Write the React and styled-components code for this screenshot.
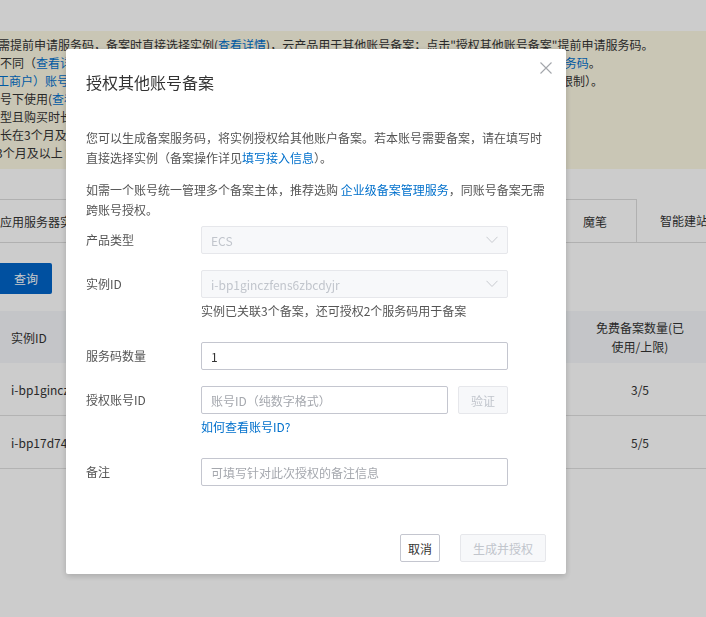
import React from 'react';
import styled, { createGlobalStyle } from 'styled-components';

const GlobalStyle = createGlobalStyle`
  html, body { margin: 0; padding: 0; background: #fff; }
  body {
    font-family: "Noto Sans CJK SC", Roboto, sans-serif;
    font-size: 12px;
    color: #333;
  }
  * { box-sizing: border-box; }
`;

const Page = styled.div`
  width: 706px;
  height: 617px;
  overflow: hidden;
  padding-top: 31px;
`;

const Notice = styled.div`
  background: #fcf8e3;
  padding: 5px 0 7px;
`;

const NoticeLine = styled.div`
  line-height: 18px;
  height: 18px;
  white-space: nowrap;
  color: #333;
  margin-left: ${(p) => p.$shift || 0}px;
`;

const A = styled.span`
  color: #0070cc;
`;

const TabBar = styled.div`
  margin-top: 30px;
  display: flex;
  height: 44px;
  border-bottom: 1px solid #dcdcdc;
`;

const Tab = styled.div`
  display: flex;
  align-items: center;
  justify-content: ${(p) => (p.$center ? 'center' : 'flex-start')};
  flex: ${(p) => (p.$grow ? '1 1 auto' : `0 0 ${p.$w}px`)};
  padding-left: ${(p) => p.$pl || 0}px;
  padding-right: ${(p) => p.$pr || 0}px;
  border-top: ${(p) => (p.$noTop ? 'none' : '1px solid #dcdcdc')};
  border-left: ${(p) => (p.$left ? '1px solid #dcdcdc' : 'none')};
  white-space: nowrap;
  overflow: hidden;
  color: #333;
`;

const Toolbar = styled.div`
  margin-top: 20px;
  display: flex;
`;

const QueryButton = styled.div`
  width: 52px;
  height: 31px;
  background: #0064c8;
  color: #fff;
  border-radius: 0 2px 2px 0;
  display: flex;
  align-items: center;
  justify-content: center;
`;

const Table = styled.div`
  margin-top: 17px;
`;

const Row = styled.div`
  display: grid;
  grid-template-columns: 1fr 120px 6px;
  height: ${(p) => (p.$head ? 52 : 53)}px;
  background: ${(p) => (p.$head ? '#f5f7fa' : '#fff')};
  border-bottom: ${(p) => (p.$head ? 'none' : '1px solid #e0e0e0')};
  align-items: center;
  color: #333;
`;

const Cell = styled.div`
  padding: ${(p) => (p.$center ? '0 12px' : '0 0 0 11px')};
  text-align: ${(p) => (p.$center ? 'center' : 'left')};
  line-height: 19px;
  white-space: ${(p) => (p.$wrap ? 'normal' : 'nowrap')};
  overflow: hidden;
`;

const Overlay = styled.div`
  position: fixed;
  inset: 0;
  background: rgba(0, 0, 0, 0.2);
`;

const Modal = styled.div`
  position: fixed;
  left: 66px;
  top: 49px;
  width: 500px;
  background: #fff;
  border-radius: 2px;
  box-shadow: 0 2px 6px rgba(0, 0, 0, 0.18);
  padding: 21px 20px 12px;
`;

const Title = styled.div`
  font-size: 16px;
  line-height: 24px;
  height: 24px;
  color: #333;
`;

const Close = styled.div`
  position: absolute;
  top: 13px;
  right: 14px;
  width: 12px;
  height: 12px;
  display: flex;
`;

const Para = styled.p`
  margin: ${(p) => p.$mt}px 0 0;
  font-size: 12px;
  line-height: 20px;
  color: #555;
`;

const Form = styled.div`
  margin-top: 6px;
`;

const FormItem = styled.div`
  display: grid;
  grid-template-columns: 115px 307px;
  margin-bottom: 16px;
`;

const Label = styled.div`
  line-height: 28px;
  color: #555;
`;

const Control = styled.div`
  display: flex;
  flex-direction: column;
`;

const SelectBox = styled.div`
  height: 28px;
  border: 1px solid #e6e7eb;
  background: #f7f8fa;
  border-radius: 2px;
  padding: 0 9px;
  display: flex;
  align-items: center;
  justify-content: space-between;
  color: #c1c5cc;
`;

const Input = styled.input`
  height: 28px;
  width: 100%;
  border: 1px solid #c4c6cf;
  border-radius: 2px;
  padding: 0 9px;
  font: inherit;
  color: #333;
  background: #fff;
  outline: none;
  &::placeholder { color: #a5a8ae; }
`;

const InlineRow = styled.div`
  display: flex;
  gap: 10px;
`;

const Help = styled.div`
  margin-top: 4px;
  margin-bottom: 6px;
  line-height: 18px;
  height: 18px;
  color: ${(p) => (p.$link ? '#0070cc' : '#555')};
`;

const Button = styled.div`
  height: 28px;
  padding: 0 ${(p) => p.$px}px;
  flex: 0 0 auto;
  border-radius: 2px;
  display: flex;
  align-items: center;
  justify-content: center;
  border: 1px solid ${(p) => (p.$disabled ? '#e6e7eb' : '#c4c6cf')};
  background: ${(p) => (p.$disabled ? '#f7f8fa' : '#fff')};
  color: ${(p) => (p.$disabled ? '#c1c5cc' : '#333')};
`;

const Footer = styled.div`
  margin-top: 48px;
  display: flex;
  justify-content: flex-end;
  gap: 20px;
`;

const Chevron = () => (
  <svg width="12" height="8" viewBox="0 0 12 8">
    <polyline points="0.5,0.8 6,6.5 11.5,0.8" fill="none" stroke="#c8cacf" strokeWidth="1" />
  </svg>
);

const CloseIcon = () => (
  <svg width="12" height="12" viewBox="0 0 12 12">
    <path d="M0.5 0.5 L11.5 11.5 M11.5 0.5 L0.5 11.5" stroke="#a3a6ab" strokeWidth="1.1" />
  </svg>
);

export default function App() {
  return (
    <>
      <GlobalStyle />
      <Page>
        <Notice>
          <NoticeLine $shift={-2}>
            需提前申请服务码，备案时直接选择实例(<A>查看详情</A>)，云产品用于其他账号备案；点击"授权其他账号备案"提前申请服务码。
          </NoticeLine>
          <NoticeLine>
            不同（<A>查看详情</A>），同一实例最多可授权5个服务码，超出限制后请重新购买新的实例或联系专属客服<A>申请服务码</A>。
          </NoticeLine>
          <NoticeLine $shift={-3}>
            <A>工商户）账号</A>下的实例可以为其他主体备案，每个实例可授权的备案服务码数量有限（详见备案服务码数量限制）。
          </NoticeLine>
          <NoticeLine>
            号下使用(<A>查看详情</A>)，不可跨账号使用。
          </NoticeLine>
          <NoticeLine>型且购买时长满足要求的实例。</NoticeLine>
          <NoticeLine>长在3个月及以上的实例。</NoticeLine>
          <NoticeLine $shift={-4}>3个月及以上 的实例。</NoticeLine>
        </Notice>

        <TabBar>
          <Tab $grow>应用服务器实例</Tab>
          <Tab $w={76} $center $pr={6}>魔笔</Tab>
          <Tab $w={70} $pl={23} $left $noTop>智能建站</Tab>
        </TabBar>

        <Toolbar>
          <QueryButton>查询</QueryButton>
        </Toolbar>

        <Table>
          <Row $head>
            <Cell>实例ID</Cell>
            <Cell $center $wrap>免费备案数量(已使用/上限)</Cell>
            <div />
          </Row>
          <Row>
            <Cell>i-bp1ginczfens6zbcdyjr</Cell>
            <Cell $center>3/5</Cell>
            <div />
          </Row>
          <Row>
            <Cell>i-bp17d74ks0x2p8mwq1</Cell>
            <Cell $center>5/5</Cell>
            <div />
          </Row>
        </Table>
      </Page>

      <Overlay />

      <Modal>
        <Title>授权其他账号备案</Title>
        <Close>
          <CloseIcon />
        </Close>
        <Para $mt={34}>
          您可以生成备案服务码，将实例授权给其他账户备案。若本账号需要备案，请在填写时直接选择实例（备案操作详见<A>填写接入信息</A>）。
        </Para>
        <Para $mt={12}>
          如需一个账号统一管理多个备案主体，推荐选购 <A>企业级备案管理服务</A>，同账号备案无需跨账号授权。
        </Para>
        <Form>
          <FormItem>
            <Label>产品类型</Label>
            <Control>
              <SelectBox>
                <span>ECS</span>
                <Chevron />
              </SelectBox>
            </Control>
          </FormItem>
          <FormItem>
            <Label>实例ID</Label>
            <Control>
              <SelectBox>
                <span>i-bp1ginczfens6zbcdyjr</span>
                <Chevron />
              </SelectBox>
              <Help>实例已关联3个备案，还可授权2个服务码用于备案</Help>
            </Control>
          </FormItem>
          <FormItem>
            <Label>服务码数量</Label>
            <Control>
              <Input defaultValue="1" />
            </Control>
          </FormItem>
          <FormItem>
            <Label>授权账号ID</Label>
            <Control>
              <InlineRow>
                <Input placeholder="账号ID（纯数字格式）" />
                <Button $px={12} $disabled>验证</Button>
              </InlineRow>
              <Help $link>如何查看账号ID?</Help>
            </Control>
          </FormItem>
          <FormItem>
            <Label>备注</Label>
            <Control>
              <Input placeholder="可填写针对此次授权的备注信息" />
            </Control>
          </FormItem>
        </Form>
        <Footer>
          <Button $px={7}>取消</Button>
          <Button $px={12} $disabled>生成并授权</Button>
        </Footer>
      </Modal>
    </>
  );
}
